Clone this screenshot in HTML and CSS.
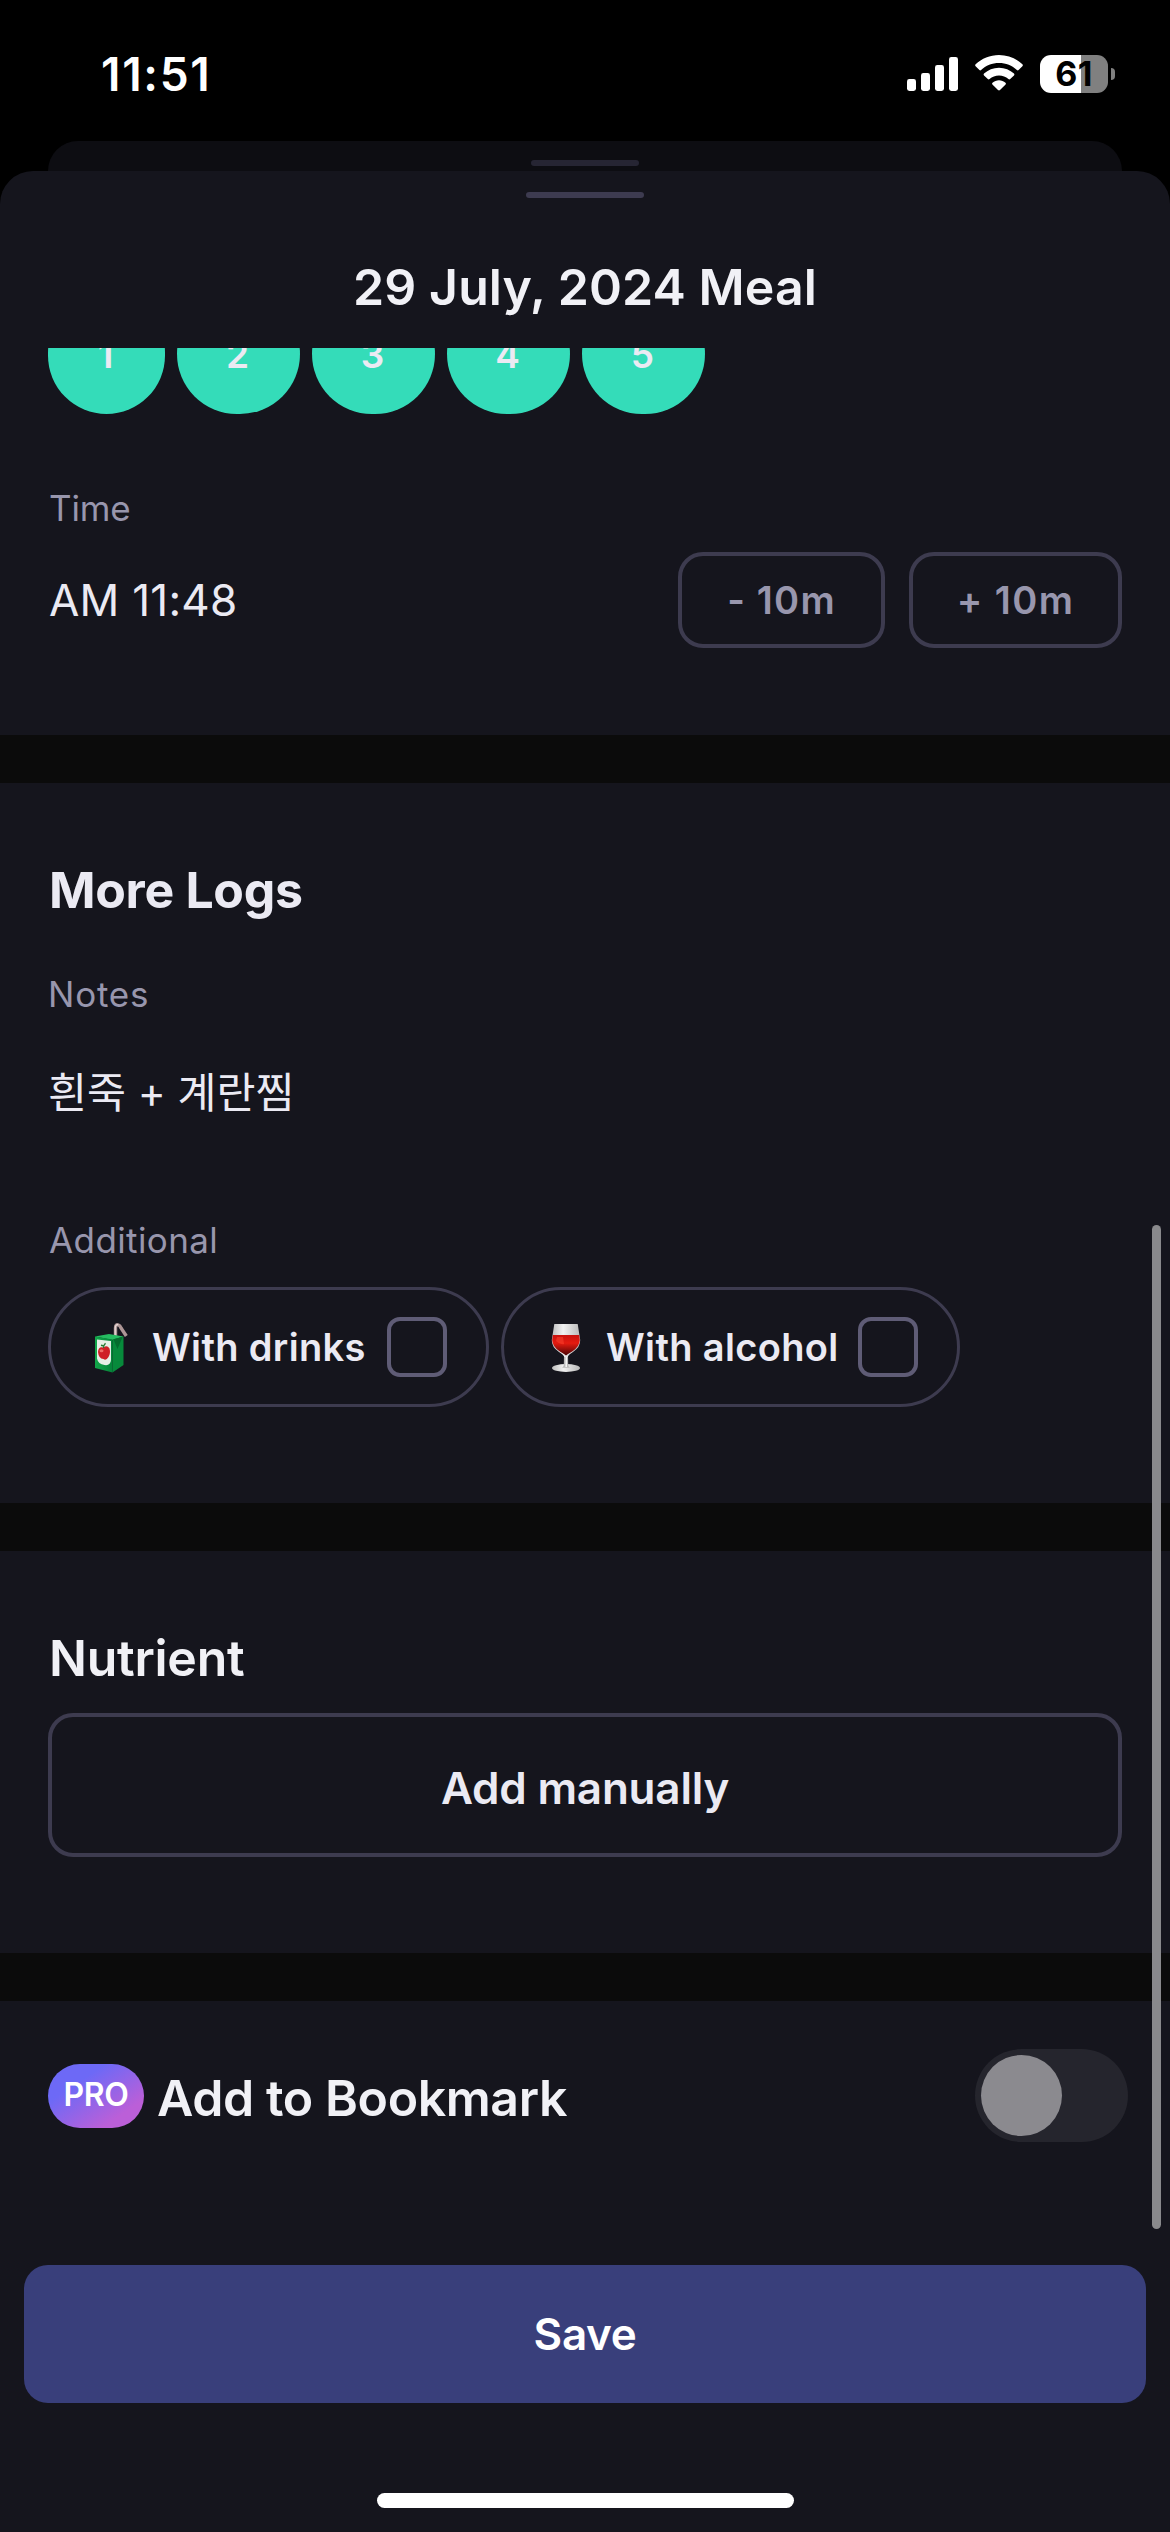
FILE: index.html
```html
<!DOCTYPE html>
<html lang="en">
<head>
<meta charset="utf-8">
<title>29 July, 2024 Meal</title>
<link rel="stylesheet" href="styles.css">
</head>
<body>
<div class="screen">
  <header class="status">
    <span class="clock">11:51</span>
    <div class="indicators">
      <svg class="signal" viewBox="0 0 51 34" fill="#fff">
        <rect x="0" y="22" width="9" height="12" rx="2.4"/>
        <rect x="14" y="16" width="9" height="18" rx="2.4"/>
        <rect x="28" y="8" width="9" height="26" rx="2.4"/>
        <rect x="42" y="0" width="9" height="34" rx="2.4"/>
      </svg>
      <svg class="wifi" viewBox="0 0 48 36" fill="#fff">
        <path d="M24 0C33 0 41.300 3.600 47.400 9.300Q48.300 10.300 47.400 11.200L43.600 15Q42.800 15.800 41.900 15C37.200 10.600 30.900 8 24 8S10.800 10.600 6.100 15Q5.200 15.800 4.400 15L.6 11.200Q-.3 10.300.6 9.300C6.700 3.600 15 0 24 0Z"/>
        <path d="M24 12.700C29.800 12.700 35 14.900 39 18.600Q39.900 19.500 39 20.400L35.200 24.100Q34.300 24.900 33.400 24.100C30.900 21.900 27.600 20.600 24 20.600S17.100 21.900 14.600 24.100Q13.700 24.900 12.800 24.100L9 20.400Q8.100 19.500 9 18.600C13 14.900 18.200 12.700 24 12.700Z"/>
        <path d="M24 25.300C26.400 25.300 28.700 26.200 30.500 27.700Q31.400 28.600 30.600 29.400L25 35.100Q24 36 23 35.100L17.400 29.400Q16.600 28.600 17.500 27.700C19.300 26.200 21.600 25.300 24 25.300Z"/>
      </svg>
      <div class="battery"><span class="level">61</span></div>
      <span class="nub"></span>
    </div>
  </header>

  <div class="back-sheet"><span class="back-grip"></span></div>

  <main class="sheet">
    <div class="sheet-head">
      <span class="grip"></span>
      <h1 class="title">29 July, 2024 Meal</h1>
    </div>

    <div class="scroll">
      <section class="section time-section">
        <div class="steps">
          <span class="step step-first">1</span>
          <span class="step">2</span>
          <span class="step">3</span>
          <span class="step">4</span>
          <span class="step">5</span>
        </div>
        <div class="label time-label">Time</div>
        <div class="time-row">
          <span class="time">AM 11:48</span>
          <button class="adjust minus">- 10m</button>
          <button class="adjust plus">+ 10m</button>
        </div>
      </section>

      <section class="section logs-section">
        <h2 class="heading logs-heading">More Logs</h2>
        <div class="label notes-label">Notes</div>
        <p class="note" lang="ko">흰죽 + 계란찜</p>
        <div class="label extra-label">Additional</div>
        <div class="chips">
          <div class="chip drinks">
            <svg class="emoji juice" viewBox="0 0 34 50">
              <defs><linearGradient id="carton" x2="1"><stop stop-color="#12a84a"/><stop offset="1" stop-color="#058239"/></linearGradient></defs>
              <path d="M21.500 14V5Q21.500 1 24.500 2Q26 2.500 27 5L32.300 13" fill="none" stroke="#ad9696" stroke-width="3.400"/>
              <path d="M21.200 13V5Q21.300 1.200 24.300 1.800" fill="none" stroke="#eadbda" stroke-width="1.200"/>
              <path d="M1 13.500L15 11L29.500 13.500L18.500 17Z" fill="#25bb60"/>
              <path d="M1 13.500L18.500 16.500V49.500L1 45Z" fill="url(#carton)"/>
              <path d="M18.500 16.500L29.500 13.500V42L18.500 49.500Z" fill="#078a3b"/>
              <path d="M19.500 16.200L28.500 14L23.500 26Z" fill="#046c2d"/>
              <path d="M3 16.500L17 18V37Q16.500 43 10.500 42Q4 41 3 35.500Z" fill="#e6efe6"/>
              <path d="M9.500 24.500Q13 21.500 15.500 25.500Q16.800 30 14.500 34Q12 38 9.500 36Q4.500 35.500 4 29Q4.300 23 9.500 24.500Z" fill="#cf2026"/>
              <ellipse cx="7.500" cy="27.700" rx="2" ry="1.500" fill="#ee6b64"/>
              <path d="M9.500 25Q9.200 22.500 11.500 20.200M10 23L7 22.300" stroke="#287933" stroke-width="1.400" fill="none"/>
            </svg>
            <span class="chip-text">With drinks</span>
            <span class="check"></span>
          </div>
          <div class="chip alcohol">
            <svg class="emoji wine" viewBox="0 0 30 50">
              <defs>
                <linearGradient id="wine" x2="0" y2="1"><stop stop-color="#c9110d"/><stop offset=".4" stop-color="#e51b10"/><stop offset="1" stop-color="#4a0405"/></linearGradient>
                <linearGradient id="glass" x2="1"><stop stop-color="#bdbdbd"/><stop offset=".4" stop-color="#f1f1f1"/><stop offset="1" stop-color="#b8b8b8"/></linearGradient>
              </defs>
              <ellipse cx="15" cy="45" rx="14" ry="3.900" fill="url(#glass)"/>
              <path d="M13 32H17L17.200 42Q17.500 44 19 44.700H11Q12.500 44 12.800 42Z" fill="#b9b9b9"/>
              <path d="M14.600 33H16V44H14.400Z" fill="#f4f4f4"/>
              <path d="M3.300 1H26.700L29.200 17Q29.500 24 22 29Q17 32 16.800 34H13.200Q13 32 8 29Q.5 24 .8 17Z" fill="url(#glass)"/>
              <path d="M1.900 12H28.100L28.800 17Q28.500 23.500 21.500 28.300Q17 31 15 32.500Q13 31 8.500 28.300Q1.500 23.500 1.200 17Z" fill="url(#wine)"/>
              <path d="M6 14H12L13 21Q9 22 5 18Z" fill="#ff4b35" opacity=".45"/>
            </svg>
            <span class="chip-text">With alcohol</span>
            <span class="check"></span>
          </div>
        </div>
      </section>

      <section class="section nutrient-section">
        <h2 class="heading">Nutrient</h2>
        <button class="manual">Add manually</button>
      </section>

      <section class="section bookmark">
        <span class="pro">PRO</span>
        <h2 class="bookmark-title">Add to Bookmark</h2>
        <span class="toggle"><span class="knob"></span></span>
      </section>
      <span class="scrollbar"></span>
    </div>

    <footer class="footer">
      <button class="save">Save</button>
      <span class="home"></span>
    </footer>
  </main>
</div>
</body>
</html>
```

FILE: styles.css
```css
* { box-sizing: border-box; }
body { margin: 0; background: #000; font-family: Inter, "Noto Sans CJK KR", sans-serif; color: #ebeaf3; }
h1, h2, p { margin: 0; }
button { margin: 0; padding: 0; background: none; font-family: inherit; color: inherit; }

.screen { width: 1170px; height: 2532px; display: flex; flex-direction: column; overflow: hidden; background: #000; }

/* Status bar */
.status { height: 141px; flex: none; display: flex; justify-content: space-between; align-items: flex-start; padding: 55px 55px 0 101px; color: #fff; }
.clock { font-size: 46px; font-weight: 600; line-height: 39px; letter-spacing: 1.7px; }
.indicators { display: flex; align-items: flex-start; }
.signal { width: 51px; height: 34px; margin: 2px 17px 0 0; }
.wifi { width: 48px; height: 36px; margin-right: 17px; }
.battery { width: 68px; height: 38px; border-radius: 11px; background: linear-gradient(90deg, #fff 41px, #808080 41px); display: flex; justify-content: center; }
.level { font-size: 34px; font-weight: 700; line-height: 38px; color: #000; letter-spacing: .5px; }
.nub { width: 4px; height: 12px; margin: 13px 0 0 3px; border-radius: 0 4px 4px 0; background: #808080; }

/* Stacked sheets */
.back-sheet { height: 30px; flex: none; margin: 0 48px; padding-top: 19px; border-radius: 30px 30px 0 0; background: #0d0d12; }
.back-grip { display: block; width: 108px; height: 6px; margin: 0 auto; border-radius: 3px; background: #262533; }
.sheet { flex: 1; min-height: 0; display: flex; flex-direction: column; border-radius: 33px 33px 0 0; background: #15151d; }
.sheet-head { height: 177px; flex: none; padding-top: 21px; display: flex; flex-direction: column; align-items: center; }
.grip { width: 118px; height: 6px; border-radius: 3px; background: #3d3b50; }
.title { margin-top: 59px; font-size: 50px; font-weight: 600; line-height: 60px; letter-spacing: .1px; color: #f1f1f6; }

.scroll { position: relative; flex: 1; min-height: 0; overflow: hidden; }
.section { padding: 0 48px; }
.section + .section { border-top: 48px solid #0b0b0b; }
.label { font-size: 35px; line-height: 42px; letter-spacing: .4px; color: #9896ad; }
.heading { padding-left: 1px; font-size: 50px; font-weight: 600; line-height: 60px; letter-spacing: -.26px; color: #f1f1f6; }

/* Time */
.time-section { padding-bottom: 87px; }
.steps { display: flex; gap: 12px; margin-top: -54px; }
.step { width: 123px; height: 120px; padding-right: 2px; border-radius: 62px; background: #34dcb9; display: flex; align-items: center; justify-content: center; font-size: 37px; font-weight: 600; }
.step-first { width: 117px; }
.time-label { margin: 73px 0 0 1px; letter-spacing: -.2px; }
.time-row { display: flex; align-items: center; margin-top: 23px; }
.time { flex: 1; padding-left: 1px; font-size: 44px; line-height: 60px; letter-spacing: .23px; }
.adjust { height: 96px; border: 4px solid #3d3b4f; border-radius: 25px; font-size: 38px; font-weight: 600; color: #9896ad; letter-spacing: 1.2px; }
.minus { width: 207px; }
.plus { width: 213px; margin-left: 24px; letter-spacing: 1.4px; }

/* More logs */
.logs-section { padding-top: 77px; padding-bottom: 96px; }
.logs-heading { font-weight: 700; letter-spacing: -.32px; color: #ebeaf3; }
.notes-label { margin-top: 53px; letter-spacing: .78px; }
.note { margin-top: 48px; font-size: 42.300px; line-height: 60px; }
.extra-label { margin: 96px 0 0 1px; }
.chips { display: flex; gap: 12px; margin-top: 26px; }
.chip { height: 120px; display: flex; align-items: center; border: 3px solid #3d3b4f; border-radius: 60px; }
.drinks { width: 441px; padding-left: 43px; }
.alcohol { width: 459px; padding-left: 47px; }
.emoji { height: 50px; flex: none; margin-top: 2px; }
.juice { width: 34px; margin-right: 24px; }
.wine { width: 30px; margin-right: 25px; }
.chip-text { font-size: 38px; font-weight: 600; line-height: 46px; letter-spacing: .35px; }
.check { width: 60px; height: 60px; margin: 0 39px 0 auto; border: 4px solid #5f5c76; border-radius: 13px; }

/* Nutrient */
.nutrient-section { padding-top: 77px; padding-bottom: 96px; }
.manual { display: block; width: 100%; height: 144px; margin-top: 25px; padding-top: 6px; border: 4px solid #3d3b4f; border-radius: 25px; font-size: 44px; font-weight: 600; letter-spacing: -.2px; }

/* Bookmark */
.bookmark { display: flex; align-items: center; padding: 48px 42px 0 48px; }
.pro { width: 96px; height: 64px; margin-top: 1px; border-radius: 32px; display: flex; align-items: center; justify-content: center; padding-bottom: 3px; background: linear-gradient(146deg, #6d69f6 30%, #bb5fd8 78%); font-size: 32px; font-weight: 600; color: #fff; letter-spacing: -.4px; }
.bookmark-title { flex: 1; margin-left: 13px; padding-top: 5px; font-size: 50px; font-weight: 600; line-height: 60px; letter-spacing: -.4px; color: #f1f1f6; }
.toggle { width: 153px; height: 93px; padding: 6px; border-radius: 47px; background: #25252d; }
.knob { display: block; width: 81px; height: 81px; border-radius: 50%; background: #8b8a8f; }

/* Lies over the right edge of the scrolled content */
.scrollbar { position: absolute; top: 877px; right: 9px; width: 9px; height: 1004px; border-radius: 5px; background: #89898c; }

/* Footer */
.footer { flex: none; display: flex; flex-direction: column; align-items: center; padding: 24px; }
.save { width: 100%; height: 138px; border: 0; border-radius: 24px; background: #393f7b; font-size: 44px; font-weight: 600; color: #fff; letter-spacing: -.35px; }
.home { width: 417px; height: 15px; margin-top: 90px; border-radius: 8px; background: #fff; }
```
